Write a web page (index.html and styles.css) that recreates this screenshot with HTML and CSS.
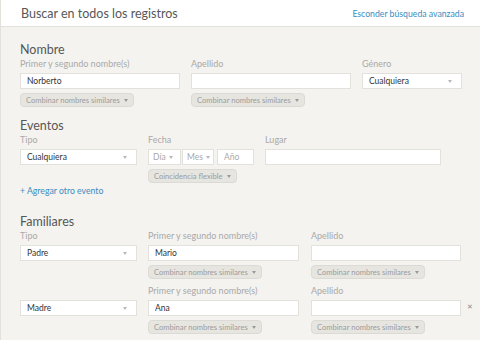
FILE: index.html
```html
<!DOCTYPE html>
<html lang="es">

<head>
    <meta charset="UTF-8">
    <meta name="viewport" content="width=device-width, initial-scale=1.0">
    <title>Buscar en todos los registros</title>
    <link rel="stylesheet" href="styles.css">
</head>

<body>
    <div class="panel">
        <header class="panel-head">
            <h1>Buscar en todos los registros</h1>
            <a class="link" href="#">Esconder búsqueda avanzada</a>
        </header>

        <div class="panel-body">
            <section class="group">
                <h2>Nombre</h2>
                <div class="row">
                    <div class="field w-160">
                        <label>Primer y segundo nombre(s)</label>
                        <input class="input" type="text" value="Norberto">
                        <span class="pill">Combinar nombres similares <i class="caret"></i></span>
                    </div>
                    <div class="field w-160">
                        <label>Apellido</label>
                        <input class="input" type="text" value="">
                        <span class="pill">Combinar nombres similares <i class="caret"></i></span>
                    </div>
                    <div class="field w-100">
                        <label>Género</label>
                        <div class="select">Cualquiera <i class="caret"></i></div>
                    </div>
                </div>
            </section>

            <section class="group">
                <h2>Eventos</h2>
                <div class="row">
                    <div class="field w-117">
                        <label>Tipo</label>
                        <div class="select">Cualquiera <i class="caret"></i></div>
                    </div>
                    <div class="field">
                        <label>Fecha</label>
                        <div class="date">
                            <div class="select muted day">Día <i class="caret"></i></div>
                            <div class="select muted month">Mes <i class="caret"></i></div>
                            <input class="input year" type="text" placeholder="Año">
                        </div>
                        <span class="pill">Coincidencia flexible <i class="caret"></i></span>
                    </div>
                    <div class="field w-176">
                        <label>Lugar</label>
                        <input class="input" type="text" value="">
                    </div>
                </div>
                <a class="link add-link" href="#">+ Agregar otro evento</a>
            </section>

            <section class="group">
                <h2>Familiares</h2>
                <div class="row">
                    <div class="field w-117">
                        <label>Tipo</label>
                        <div class="select">Padre <i class="caret"></i></div>
                    </div>
                    <div class="field w-151">
                        <label>Primer y segundo nombre(s)</label>
                        <input class="input" type="text" value="Mario">
                        <span class="pill">Combinar nombres similares <i class="caret"></i></span>
                    </div>
                    <div class="field w-150">
                        <label>Apellido</label>
                        <input class="input" type="text" value="">
                        <span class="pill">Combinar nombres similares <i class="caret"></i></span>
                    </div>
                </div>
                <div class="row">
                    <div class="field w-117">
                        <label>&nbsp;</label>
                        <div class="select">Madre <i class="caret"></i></div>
                    </div>
                    <div class="field w-151">
                        <label>Primer y segundo nombre(s)</label>
                        <input class="input" type="text" value="Ana">
                        <span class="pill">Combinar nombres similares <i class="caret"></i></span>
                    </div>
                    <div class="field w-150">
                        <label>Apellido</label>
                        <input class="input" type="text" value="">
                        <span class="pill">Combinar nombres similares <i class="caret"></i></span>
                    </div>
                    <button class="remove" type="button">✕</button>
                </div>
            </section>
        </div>
    </div>
</body>

</html>
```

FILE: styles.css
```css
:root {
    --bg: #f4f3ef;
    --line: #e3e1dc;
    --text: #333333;
    --heading: #575757;
    --label: #a9a9a9;
    --link: #3a8dbf;
    --pill-bg: #e7e5e0;
}

* {
    margin: 0;
    padding: 0;
    box-sizing: border-box;
    font-family: Lato, "Open Sans", sans-serif;
}

body {
    background: var(--bg);
    color: var(--text);
    font-size: 9px;
    overflow: hidden;
}

.panel {
    min-height: 340px;
    border-left: 1px solid var(--line);
}

.panel-head {
    height: 27px;
    background: #fff;
    border-bottom: 1px solid var(--line);
    display: flex;
    align-items: center;
    justify-content: space-between;
    padding: 0 16px 0 20px;
}

h1 {
    font-size: 12.5px;
    font-weight: 400;
    color: var(--heading);
}

.link {
    font-size: 8.7px;
    color: var(--link);
    text-decoration: none;
}

.panel-body {
    padding: 15px 0 0 19px;
}

.group+.group {
    margin-top: 11px;
}

.group:last-child {
    margin-top: 17px;
}

h2 {
    font-size: 12.5px;
    line-height: 16px;
    font-weight: 400;
    color: var(--heading);
}

.row {
    display: flex;
    align-items: flex-start;
    gap: 11px;
}

.row+.row {
    margin-top: 6px;
}

.field {
    display: flex;
    flex-direction: column;
    align-items: flex-start;
    flex-shrink: 0;
}

.field label {
    font-size: 9px;
    line-height: 12px;
    color: var(--label);
    margin-bottom: 3px;
}

.w-100 { width: 100px; }
.w-117 { width: 117px; }
.w-150 { width: 150px; }
.w-151 { width: 151px; }
.w-160 { width: 160px; }
.w-176 { width: 176px; }

.input,
.select {
    width: 100%;
    height: 16px;
    background: #fff;
    border: 1px solid var(--line);
    font-size: 8.5px;
    color: var(--text);
    padding: 0 6px;
    outline: none;
}

.input::placeholder {
    color: var(--label);
}

.select {
    display: flex;
    align-items: center;
    justify-content: space-between;
}

.select .caret {
    border-top-color: #b8b8b8;
    margin-right: 3px;
}

.select.muted {
    color: var(--label);
    padding: 0 4px;
}

.caret {
    display: inline-block;
    width: 0;
    height: 0;
    border-left: 2.5px solid transparent;
    border-right: 2.5px solid transparent;
    border-top: 3px solid #9a9a9a;
    margin-left: 3px;
}

.date {
    display: flex;
}

.day { width: 33px; }
.month { width: 32px; margin-left: 1px; }
.year { width: 37px; margin-left: 3px; }

.pill {
    display: inline-flex;
    align-items: center;
    height: 14px;
    margin-top: 4px;
    padding: 0 5px 0 5px;
    background: var(--pill-bg);
    border: 1px solid #dcdad4;
    border-radius: 4px;
    font-size: 7.6px;
    color: #9c9c9c;
    white-space: nowrap;
}

.pill .caret {
    margin-left: 4px;
}

.add-link {
    display: block;
    width: fit-content;
    margin-top: 2px;
    line-height: 12px;
}

.row .w-151 + .w-150 {
    margin-left: 1px;
}

/* sits closer to the field than the row gap */
.remove {
    flex-shrink: 0;
    width: 8px;
    margin: 18px 0 0 -6px;
    padding: 0;
    border: none;
    background: none;
    font-family: "DejaVu Sans", sans-serif;
    font-size: 7px;
    line-height: 8px;
    font-weight: 700;
    color: #8a8a8a;
    cursor: pointer;
}
```
